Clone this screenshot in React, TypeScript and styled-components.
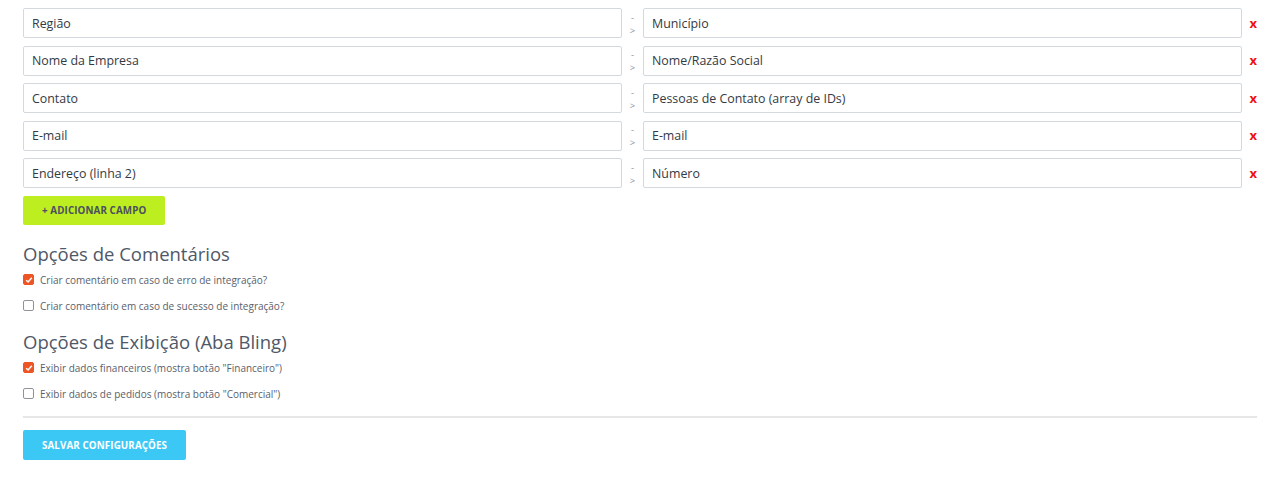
import React, { useState } from 'react';
import styled, { createGlobalStyle } from 'styled-components';

const GlobalStyle = createGlobalStyle`
    body {
        margin: 0;
        background: #ffffff;
        font-family: 'Open Sans', 'Noto Sans', sans-serif;
    }
`;

const Page = styled.div`
    padding: 8px 23px 20px 23px;
    box-sizing: border-box;
    width: 1280px;
`;

const MapList = styled.div`
    display: flex;
    flex-direction: column;
    gap: 7.5px;
`;

const MapRow = styled.div`
    display: grid;
    grid-template-columns: 599px 21px 599px 15px;
    align-items: center;
    height: 30px;
`;

const FieldInput = styled.input`
    box-sizing: border-box;
    width: 100%;
    height: 30px;
    border: 1px solid #d3d9de;
    border-radius: 2px;
    padding: 0 8px;
    font-family: 'Open Sans', sans-serif;
    font-size: 12.4px;
    color: #333a44;
    background: #fff;
    outline: none;
`;

const Arrow = styled.span`
    display: flex;
    flex-direction: column;
    align-items: center;
    font-size: 9.5px;
    line-height: 13px;
    color: #8a9099;
    margin-top: 1px;
`;

const RemoveButton = styled.button`
    border: none;
    background: none;
    padding: 0;
    color: #ee1111;
    font-family: 'Open Sans', sans-serif;
    font-weight: 700;
    font-size: 13px;
    text-align: right;
    cursor: pointer;
    line-height: 1;
`;

const ActionButton = styled.button<{ $variant: 'add' | 'save' }>`
    border: none;
    border-radius: 2px;
    font-family: 'Open Sans', sans-serif;
    font-weight: 700;
    font-size: 9.8px;
    letter-spacing: 0.1px;
    text-transform: uppercase;
    cursor: pointer;
    height: ${(p) => (p.$variant === 'add' ? '29px' : '30px')};
    padding: 0 19px;
    background: ${(p) => (p.$variant === 'add' ? '#bdee1f' : '#3cc8f5')};
    color: ${(p) => (p.$variant === 'add' ? '#4a5060' : '#ffffff')};
`;

const AddWrap = styled.div`
    margin-top: 8px;
    padding-bottom: 1px;
`;

const SectionTitle = styled.h3`
    margin: 16px 0 5px 0;
    font-family: 'Open Sans', sans-serif;
    font-weight: 400;
    font-size: 18.5px;
    line-height: 24px;
    color: #4f5868;
`;

const OptionList = styled.div`
    display: flex;
    flex-direction: column;
    gap: 9px;
`;

const OptionLabel = styled.label`
    display: flex;
    align-items: center;
    gap: 6px;
    height: 17px;
    font-size: 10px;
    color: #5a606b;
    cursor: pointer;
`;

const CheckBox = styled.span<{ $checked: boolean }>`
    box-sizing: border-box;
    width: 11px;
    height: 11px;
    border-radius: 2px;
    border: 1px solid ${(p) => (p.$checked ? '#ee5524' : '#8f949b')};
    background: ${(p) => (p.$checked ? '#ee5524' : '#fff')};
    display: flex;
    align-items: center;
    justify-content: center;
`;

const Divider = styled.hr`
    border: none;
    border-top: 2px solid #e6e6e6;
    margin: 14px 0 12px 0;
`;

const fields = [
    ['Região', 'Município'],
    ['Nome da Empresa', 'Nome/Razão Social'],
    ['Contato', 'Pessoas de Contato (array de IDs)'],
    ['E-mail', 'E-mail'],
    ['Endereço (linha 2)', 'Número'],
];

const Option: React.FC<{ label: string; initial: boolean }> = ({ label, initial }) => {
    const [checked, setChecked] = useState(initial);
    return (
        <OptionLabel onClick={() => setChecked(!checked)}>
            <CheckBox $checked={checked}>
                {checked && (
                    <svg width="8" height="8" viewBox="0 0 8 8">
                        <path d="M1.2 4.2 L3.1 6 L6.8 1.8" stroke="#fff" strokeWidth="1.5" fill="none" />
                    </svg>
                )}
            </CheckBox>
            {label}
        </OptionLabel>
    );
};

export default function App() {
    return (
        <Page>
            <GlobalStyle />
            <MapList>
                {fields.map(([left, right], i) => (
                    <MapRow key={i}>
                        <FieldInput defaultValue={left} />
                        <Arrow>
                            <span>-</span>
                            <span>&gt;</span>
                        </Arrow>
                        <FieldInput defaultValue={right} />
                        <RemoveButton>x</RemoveButton>
                    </MapRow>
                ))}
            </MapList>
            <AddWrap>
                <ActionButton $variant="add">+ Adicionar Campo</ActionButton>
            </AddWrap>

            <SectionTitle>Opções de Comentários</SectionTitle>
            <OptionList>
                <Option label="Criar comentário em caso de erro de integração?" initial={true} />
                <Option label="Criar comentário em caso de sucesso de integração?" initial={false} />
            </OptionList>

            <SectionTitle>Opções de Exibição (Aba Bling)</SectionTitle>
            <OptionList>
                <Option label='Exibir dados financeiros (mostra botão "Financeiro")' initial={true} />
                <Option label='Exibir dados de pedidos (mostra botão "Comercial")' initial={false} />
            </OptionList>

            <Divider />
            <ActionButton $variant="save">Salvar Configurações</ActionButton>
        </Page>
    );
}
